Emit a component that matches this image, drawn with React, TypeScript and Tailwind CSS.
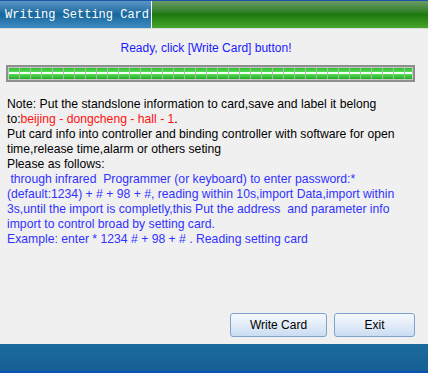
import React from 'react';

const SEGMENTS = Array.from({ length: 38 });

const ProgressBar: React.FC = () => (
  <div className="mx-[6px] h-[17px] w-[409px] border-2 border-[#8e8e8e] bg-[#c8c8c8] p-px">
    <div className="flex h-full overflow-hidden">
      {SEGMENTS.map((_, i) => (
        <div
          key={i}
          className="flex h-full w-[11px] shrink-0 flex-col border-r border-[#a8bca8]"
        >
          <div className="h-[4px] bg-gradient-to-b from-[#2fbf2f] to-[#55d955]" />
          <div className="h-[2px] bg-[#f6fff6]" />
          <div className="flex-1 bg-gradient-to-b from-[#55dc55] to-[#22ad22]" />
        </div>
      ))}
    </div>
  </div>
);

const Btn: React.FC<{ label: string; w: string }> = ({ label, w }) => (
  <button
    className={`${w} h-[24px] rounded-[3px] border border-[#7fa2cd] bg-gradient-to-b from-[#f6f9fe] via-[#e2ecf8] to-[#c9dcf3] text-[12px] text-black`}
  >
    {label}
  </button>
);

export default function App() {
  return (
    <div className="flex h-[373px] w-[428px] flex-col bg-[#f0f0f0] font-['Liberation_Sans',Arial,sans-serif]">
      {/* title bar */}
      <div className="flex h-[28px] border-t border-[#1b55a8]">
        <div className="flex w-[151px] items-center bg-gradient-to-b from-[#5b97c6] via-[#14679d] to-[#3f8cc2] pl-[5px] font-['Liberation_Mono',monospace] text-[12px] text-white">
          Writing Setting Card
        </div>
        <div className="w-px bg-white" />
        <div className="flex-1 bg-gradient-to-b from-[#6a9a66] via-[#1c7a0e] to-[#46a52a]" />
      </div>
      <div className="h-px bg-[#dcdcdc]" />

      {/* body */}
      <div className="flex flex-1 flex-col">
        <div className="pt-[12px] pr-[16px] text-center text-[12px] leading-[15px] text-[#1a1aff]">
          Ready, click [Write Card] button!
        </div>
        <div className="mt-[9px]">
          <ProgressBar />
        </div>
        <div className="mt-[15px] whitespace-pre pl-[7px] text-[12.2px] leading-[15px]">
          <div className="text-black">
            Note: Put the standslone information to card,save and label it belong
          </div>
          <div className="text-black">
            to:<span className="text-[#ff1010]">beijing - dongcheng - hall - 1</span>.
          </div>
          <div className="text-black">
            Put card info into controller and binding controller with software for open
          </div>
          <div className="text-black">time,release time,alarm or others seting</div>
          <div className="text-black">Please as follows:</div>
          <div className="text-[#3232ff]">
            {' through infrared  Programmer (or keyboard) to enter password:*'}
          </div>
          <div className="text-[#3232ff]">
            (default:1234) + # + 98 + #, reading within 10s,import Data,import within
          </div>
          <div className="text-[#3232ff]">
            {'3s,until the import is completly,this Put the address  and parameter info'}
          </div>
          <div className="text-[#3232ff]">import to control broad by setting card.</div>
          <div className="text-[#3232ff]">
            Example: enter * 1234 # + 98 + # . Reading setting card
          </div>
        </div>
        <div className="mt-auto flex justify-end gap-[7px] pb-[7px] pr-[13px]">
          <Btn label="Write Card" w="w-[97px]" />
          <Btn label="Exit" w="w-[81px]" />
        </div>
      </div>

      {/* footer */}
      <div className="flex h-[29px] flex-col">
        <div className="flex-1 bg-gradient-to-b from-[#1b6b9f] to-[#155f93]" />
        <div className="h-[2px] bg-[#0a4fb4]" />
      </div>
    </div>
  );
}
